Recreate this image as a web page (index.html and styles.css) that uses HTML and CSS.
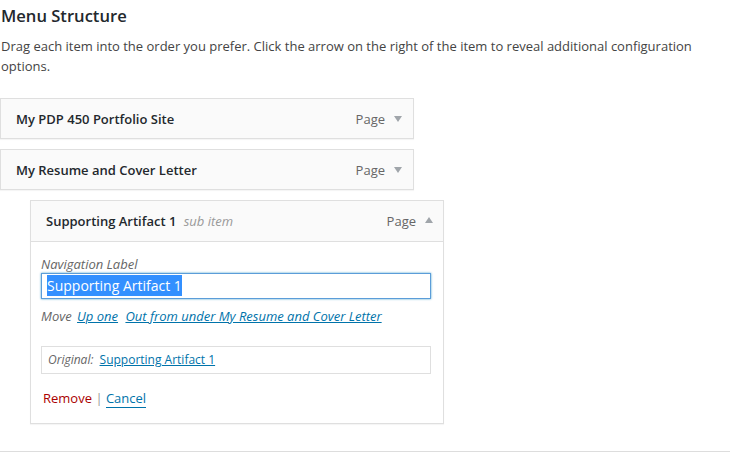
FILE: index.html
```html
<!DOCTYPE html>
<html lang="en">
<head>
<meta charset="UTF-8">
<title>Menu Structure</title>
<link rel="stylesheet" href="styles.css">
</head>
<body>
    <h3>Menu Structure</h3>
    <p class="desc">Drag each item into the order you prefer. Click the arrow on the right of the item to reveal additional configuration options.</p>

    <ul class="menu">
        <li class="item">
            <div class="bar">
                <span class="title">My PDP 450 Portfolio Site</span>
                <span class="type">Page</span>
                <span class="arrow"></span>
            </div>
        </li>
        <li class="item">
            <div class="bar">
                <span class="title">My Resume and Cover Letter</span>
                <span class="type">Page</span>
                <span class="arrow"></span>
            </div>
        </li>
        <li class="item sub open">
            <div class="bar">
                <span class="title">Supporting Artifact 1 <span class="subtitle">sub item</span></span>
                <span class="type">Page</span>
                <span class="arrow up"></span>
            </div>
            <div class="settings">
                <label class="lbl">Navigation Label</label>
                <div class="field"><span class="sel">Supporting Artifact 1</span></div>
                <p class="move">Move <a href="#">Up one</a> <a href="#">Out from under My Resume and Cover Letter</a></p>
                <div class="original">Original: <a href="#">Supporting Artifact 1</a></div>
                <div class="actions">
                    <a class="remove" href="#">Remove</a> <span class="sep">|</span> <a class="cancel" href="#">Cancel</a>
                </div>
            </div>
        </li>
    </ul>
    <div class="footer"></div>
</body>
</html>
```

FILE: styles.css
```css
body {
    margin: 0;
    font-family: "Open Sans", sans-serif;
    font-size: 13px;
    color: #23282d;
    background: #fff;
}
h3 {
    margin: 0;
    padding: 4px 0 0 1px;
    font-size: 16.6px;
    font-weight: 600;
    line-height: 24px;
}
.desc {
    margin: 8px 0 0 1px;
    line-height: 20px;
    color: #444;
}
.menu {
    list-style: none;
    margin: 22px 0 0;
    padding: 0;
}
.item {
    width: 414px;
    margin-bottom: 10px;
}
.item.sub {
    margin-left: 30px;
    border: 1px solid #dfdfdf;
    box-sizing: border-box;
    box-shadow: 0 1px 1px rgba(0, 0, 0, 0.04);
}
.bar {
    display: flex;
    align-items: center;
    height: 39px;
    padding: 0 11px 0 15px;
    border: 1px solid #dfdfdf;
    background: #fafafa;
    box-shadow: 0 1px 1px rgba(0, 0, 0, 0.04);
}
.sub .bar {
    height: 40px;
    border: none;
    border-bottom: 1px solid #dfdfdf;
    box-shadow: none;
    padding-left: 15px;
    padding-right: 10px;
}
.title {
    flex: 1;
    font-weight: 600;
    color: #23282d;
}
.subtitle {
    font-weight: 400;
    font-style: italic;
    color: #999;
    margin-left: 4px;
}
.type {
    color: #666;
    margin-right: 9px;
}
.arrow {
    width: 0;
    height: 0;
    border-left: 4px solid transparent;
    border-right: 4px solid transparent;
    border-top: 6px solid #a0a5aa;
    margin-top: 1px;
}
.arrow.up {
    border-top: none;
    border-bottom: 6px solid #a0a5aa;
    margin-top: -2px;
}
.settings {
    padding: 13px 12px 15px 10px;
}
.lbl {
    display: block;
    font-style: italic;
    color: #666;
    line-height: 18px;
}
.field {
    height: 24px;
    border: 1px solid #5b9dd9;
    box-shadow: 0 0 2px rgba(30, 140, 190, 0.8);
    padding: 0 5px;
    font-size: 14px;
    line-height: 24px;
    color: #32373c;
}
.sel {
    background: #3390ff;
    color: #fff;
    padding: 1px 0;
}
.move {
    margin: 8px 0 0;
    line-height: 18px;
    font-style: italic;
    color: #666;
}
.move a {
    color: #0073aa;
    margin-left: 2px;
}
.move a + a {
    margin-left: 4px;
}
.original {
    margin-top: 21px;
    border: 1px solid #dfdfdf;
    height: 26px;
    line-height: 26px;
    padding: 0 6px;
    font-size: 12px;
    font-style: italic;
    color: #666;
}
.original a {
    font-style: normal;
    color: #0073aa;
    margin-left: 3px;
}
.actions {
    margin-top: 14px;
    line-height: 20px;
    padding-left: 2px;
}
.remove {
    color: #a00;
    text-decoration: none;
}
.sep {
    color: #999;
}
.cancel {
    color: #0073aa;
    text-decoration: none;
    border-bottom: 1px solid #0073aa;
}
.footer {
    margin-top: 27px;
    border-top: 1px solid #ddd;
}
```
